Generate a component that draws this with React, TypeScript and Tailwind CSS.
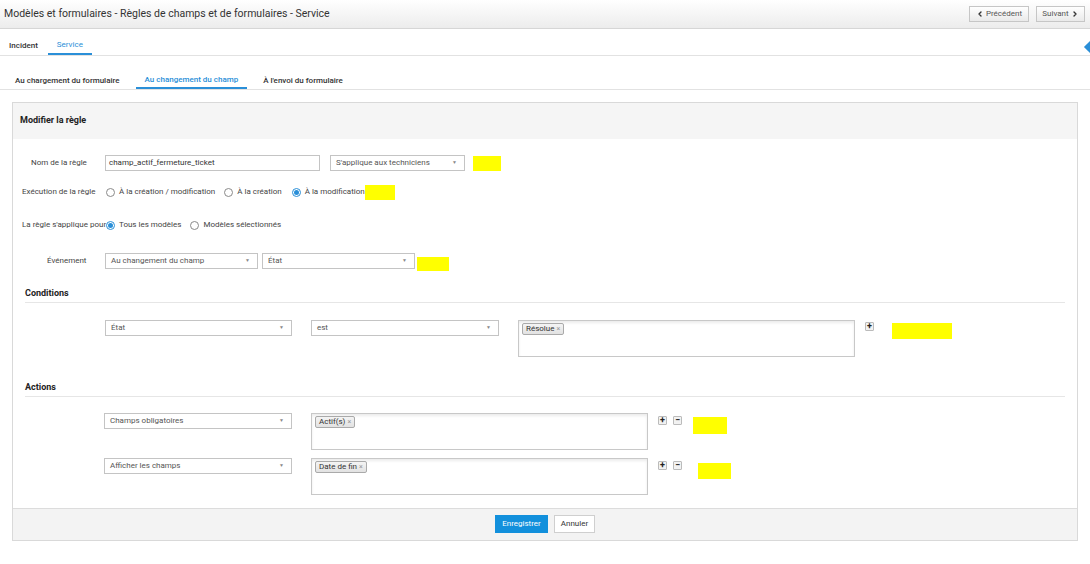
import { ChevronLeft, ChevronRight } from "lucide-react";

const font = { fontFamily: "Roboto, 'Liberation Sans', sans-serif" };

function Radio({ checked }: { checked?: boolean }) {
  return (
    <span
      className={
        "relative z-10 w-[9px] h-[9px] rounded-full border flex items-center justify-center shrink-0 bg-white " +
        (checked ? "border-[#2a8fd8]" : "border-[#8a8a8a]")
      }
    >
      {checked && <span className="w-[5px] h-[5px] rounded-full bg-[#2a8fd8]" />}
    </span>
  );
}

function Select({ value, className }: { value: string; className: string }) {
  return (
    <div
      className={
        "h-[16px] border border-[#c4c4c4] bg-white flex items-center justify-between pl-[5px] pr-[7px] text-[#555] " +
        className
      }
    >
      <span>{value}</span>
      <span className="text-[5px] text-[#888]">▼</span>
    </div>
  );
}

function Tag({ label }: { label: string }) {
  return (
    <span className="inline-flex items-center h-[12px] px-[3px] border border-[#aaa] rounded-[2px] bg-gradient-to-b from-[#f4f4f4] to-[#e2e2e2] text-[#333] text-[8px]">
      {label}
      <span className="ml-[2px] text-[#999] text-[7px]">×</span>
    </span>
  );
}

function TagBox({ label, className }: { label: string; className: string }) {
  return (
    <div
      className={
        "border border-[#c8c8c8] bg-white shadow-[inset_0_2px_3px_rgba(0,0,0,0.08)] p-[2px] pl-[3px] " + className
      }
    >
      <Tag label={label} />
    </div>
  );
}

function SmallBtn({ sign }: { sign: string }) {
  return (
    <span className="w-[9px] h-[9px] border border-[#bbb] rounded-[1px] bg-[#f2f2f2] flex items-center justify-center text-[9px] leading-none font-bold text-[#222] shrink-0">
      {sign}
    </span>
  );
}

function Yellow({ className }: { className: string }) {
  return <span className={"bg-[#ffff00] shrink-0 " + className} />;
}

export default function App() {
  return (
    <div className="w-[1090px] h-[564px] bg-white overflow-hidden text-[8px] text-[#444]" style={font}>
      {/* top bar */}
      <div className="h-[29px] flex items-center justify-between pl-[4px] pr-[5px] bg-gradient-to-b from-white to-[#ececec] border-b border-[#d6d6d6]">
        <span className="text-[10.5px] text-[#333]">
          Modèles et formulaires - Règles de champs et de formulaires - Service
        </span>
        <div className="flex gap-[7px]">
          <button className="h-[16px] w-[60px] flex items-center justify-center border border-[#c6c6c6] bg-gradient-to-b from-white to-[#eaeaea] text-[8px] text-[#555]">
            <ChevronLeft className="w-[8px] h-[8px] mr-[2px] text-[#333]" strokeWidth={4} />
            Précédent
          </button>
          <button className="h-[16px] w-[49px] flex items-center justify-center border border-[#c6c6c6] bg-gradient-to-b from-white to-[#eaeaea] text-[8px] text-[#555]">
            Suivant
            <ChevronRight className="w-[8px] h-[8px] ml-[2px] text-[#333]" strokeWidth={4} />
          </button>
        </div>
      </div>

      {/* main tabs */}
      <div className="relative h-[27px] flex items-end border-b border-[#e2e2e2]">
        <div className="px-[9px] h-[18px] flex items-center font-medium text-[#333]">Incident</div>
        <div className="ml-[1px] px-[9px] h-[18px] flex items-center text-[#2a8fd8] border-b-2 border-[#2a8fd8]">
          Service
        </div>
        <span className="absolute right-[-6px] top-[13px] w-[10px] h-[10px] rotate-45 bg-[#2a8fd8]" />
      </div>

      {/* sub tabs */}
      <div className="h-[34px] flex items-end border-b border-[#e2e2e2] pl-[6px]">
        <div className="px-[9px] h-[16px] flex items-center font-medium text-[#333]">Au chargement du formulaire</div>
        <div className="ml-[7px] px-[9px] h-[16px] flex items-center font-medium text-[#2a8fd8] border-b-2 border-[#2a8fd8]">
          Au changement du champ
        </div>
        <div className="ml-[7px] px-[9px] h-[16px] flex items-center font-medium text-[#333]">À l'envoi du formulaire</div>
      </div>

      {/* panel */}
      <div className="ml-[12px] mt-[12px] w-[1066px] h-[439px] border border-[#d9d9d9] flex flex-col">
        <div className="h-[36px] bg-[#f5f5f5] flex items-center pl-[7px] font-bold text-[#222] text-[9px]">
          Modifier la règle
        </div>

        <div className="flex-1 flex flex-col">
          {/* row 1 */}
          <div className="mt-[16px] h-[16px] flex items-center pl-[9px]">
            <span className="w-[83px] pl-[9px]">Nom de la règle</span>
            <div className="w-[215px] h-[16px] border border-[#c4c4c4] flex items-center pl-[3px] text-[#333]">
              champ_actif_fermeture_ticket
            </div>
            <Select value="S'applique aux techniciens" className="ml-[10px] w-[135px]" />
            <Yellow className="ml-[8px] w-[28px] h-[15px]" />
          </div>

          {/* row 2 */}
          <div className="mt-[13px] h-[16px] flex items-center pl-[9px]">
            <span className="w-[84px]">Exécution de la règle</span>
            <Radio />
            <span className="ml-[4px]">À la création / modification</span>
            <span className="ml-[9px]"><Radio /></span>
            <span className="ml-[4px]">À la création</span>
            <span className="ml-[10px]"><Radio checked /></span>
            <span className="ml-[4px]">À la modification</span>
            <Yellow className="w-[30px] h-[15px]" />
          </div>

          {/* row 3 */}
          <div className="mt-[17px] h-[16px] flex items-center pl-[9px]">
            <span className="w-[84px] whitespace-nowrap">La règle s'applique pour</span>
            <Radio checked />
            <span className="ml-[4px]">Tous les modèles</span>
            <span className="ml-[9px]"><Radio /></span>
            <span className="ml-[4px]">Modèles sélectionnés</span>
          </div>

          {/* row 4 */}
          <div className="mt-[20px] h-[16px] flex items-center pl-[9px]">
            <span className="w-[83px] pl-[25px]">Événement</span>
            <Select value="Au changement du champ" className="w-[153px]" />
            <Select value="État" className="ml-[4px] w-[153px]" />
            <Yellow className="ml-[2px] mt-[6px] w-[32px] h-[14px]" />
          </div>

          {/* conditions */}
          <div className="mt-[17px] mx-[12px] pb-[2px] border-b border-[#e6e6e6] font-bold text-[#222] text-[9px] leading-[14px]">
            Conditions
          </div>
          <div className="mt-[17px] flex items-start pl-[92px]">
            <Select value="État" className="w-[187px]" />
            <Select value="est" className="ml-[19px] w-[188px]" />
            <TagBox label="Résolue" className="ml-[19px] w-[337px] h-[37px]" />
            <span className="ml-[10px] mt-[2px]"><SmallBtn sign="+" /></span>
            <Yellow className="ml-[18px] mt-[3px] w-[60px] h-[16px]" />
          </div>

          {/* actions */}
          <div className="mt-[23px] mx-[12px] pb-[2px] border-b border-[#e6e6e6] font-bold text-[#222] text-[9px] leading-[14px]">
            Actions
          </div>
          <div className="mt-[16px] flex items-start pl-[91px]">
            <Select value="Champs obligatoires" className="w-[188px]" />
            <TagBox label="Actif(s)" className="ml-[19px] w-[337px] h-[37px]" />
            <span className="ml-[10px] mt-[3px] flex gap-[6px]">
              <SmallBtn sign="+" />
              <SmallBtn sign="−" />
            </span>
            <Yellow className="ml-[11px] mt-[4px] w-[34px] h-[17px]" />
          </div>
          <div className="mt-[8px] flex items-start pl-[91px]">
            <Select value="Afficher les champs" className="w-[188px]" />
            <TagBox label="Date de fin" className="ml-[19px] w-[337px] h-[37px]" />
            <span className="ml-[10px] mt-[3px] flex gap-[6px]">
              <SmallBtn sign="+" />
              <SmallBtn sign="−" />
            </span>
            <Yellow className="ml-[16px] mt-[5px] w-[33px] h-[16px]" />
          </div>
        </div>

        {/* footer */}
        <div className="h-[32px] bg-[#f3f3f3] border-t border-[#dcdcdc] flex justify-center items-start pt-[6px] gap-[6px]">
          <button className="h-[18px] w-[53px] bg-[#1290dc] text-white text-[8px]">Enregistrer</button>
          <button className="h-[18px] w-[41px] bg-white border border-[#cfcfcf] text-[#333] text-[8px]">Annuler</button>
        </div>
      </div>
    </div>
  );
}
